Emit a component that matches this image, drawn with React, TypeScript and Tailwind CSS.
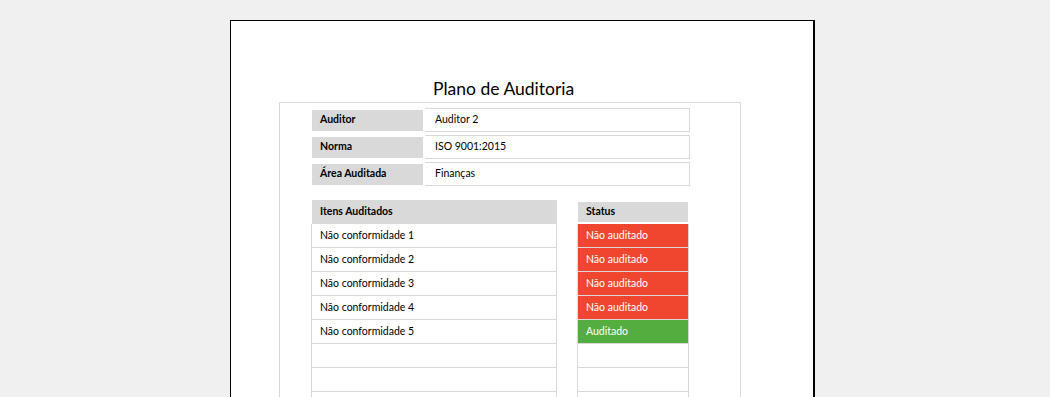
const info = [
  { label: "Auditor", value: "Auditor 2" },
  { label: "Norma", value: "ISO 9001:2015" },
  { label: "Área Auditada", value: "Finanças" },
];

const items: { name: string; status: "nao" | "ok" | "" }[] = [
  { name: "Não conformidade 1", status: "nao" },
  { name: "Não conformidade 2", status: "nao" },
  { name: "Não conformidade 3", status: "nao" },
  { name: "Não conformidade 4", status: "nao" },
  { name: "Não conformidade 5", status: "ok" },
  { name: "", status: "" },
  { name: "", status: "" },
  { name: "", status: "" },
];

export default function App() {
  return (
    <div
      className="h-[397px] w-[1050px] overflow-hidden bg-[#f0f0f0] pl-[230px] pt-[20px] text-black"
      style={{ fontFamily: "Lato, 'Open Sans', sans-serif" }}
    >
      {/* Folha */}
      <div className="h-[400px] w-[585px] border-l border-t border-r-2 border-black bg-white pl-[48px]">
        <div className="pl-[154px] pt-[56px] text-[17.5px] leading-[24px]">Plano de Auditoria</div>

        <div className="mt-px h-[320px] w-[462px] border border-[#d9d9d9] pl-[31px] pt-[5px]">
          {/* Cabeçalho */}
          <div className="flex flex-col gap-[3px]">
            {info.map((r) => (
              <div key={r.label} className="flex items-center">
                <div className="ml-px flex h-[21px] w-[111px] items-center bg-[#d9d9d9] pl-[8px] text-[10.5px] font-bold">
                  {r.label}
                </div>
                <div className="ml-[2px] flex h-[24px] w-[265px] items-center border border-l-0 border-[#d9d9d9] pl-[10px] text-[10.5px]">
                  {r.value}
                </div>
              </div>
            ))}
          </div>

          {/* Tabelas */}
          <div className="mt-[14px] flex items-start">
            <div className="w-[246px]">
              <div className="ml-px flex h-[24px] items-center bg-[#d9d9d9] pl-[8px] text-[10.5px] font-bold">
                Itens Auditados
              </div>
              {items.map((it, i) => (
                <div
                  key={i}
                  className="flex h-[24px] items-center border-x border-b border-[#d9d9d9] pl-[8px] text-[10.5px]"
                >
                  {it.name}
                </div>
              ))}
            </div>

            <div className="ml-[20px] w-[112px]">
              <div className="mx-px my-[2px] flex h-[20px] items-center bg-[#d9d9d9] pl-[8px] text-[10.5px] font-bold">
                Status
              </div>
              {items.map((it, i) => (
                <div
                  key={i}
                  className={
                    "flex h-[24px] items-center border-x border-b border-[#d9d9d9] pl-[8px] text-[10.5px] " +
                    (it.status === "nao"
                      ? "bg-[#f0462f] text-white"
                      : it.status === "ok"
                        ? "bg-[#53ae3f] text-white"
                        : "")
                  }
                >
                  {it.status === "nao" ? "Não auditado" : it.status === "ok" ? "Auditado" : ""}
                </div>
              ))}
            </div>
          </div>
        </div>
      </div>
    </div>
  );
}
